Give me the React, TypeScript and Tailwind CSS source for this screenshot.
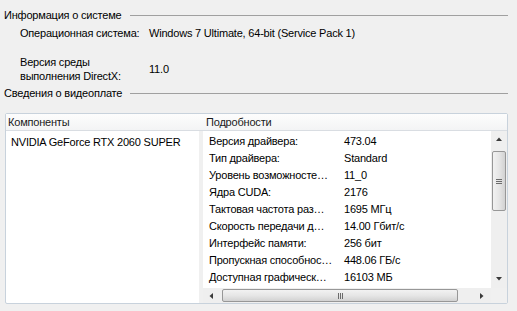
const rows: [string, string][] = [
  ['Версия драйвера:', '473.04'],
  ['Тип драйвера:', 'Standard'],
  ['Уровень возможносте…', '11_0'],
  ['Ядра CUDA:', '2176'],
  ['Тактовая частота раз…', '1695 МГц'],
  ['Скорость передачи д…', '14.00 Гбит/с'],
  ['Интерфейс памяти:', '256 бит'],
  ['Пропускная способнос…', '448.06 ГБ/с'],
  ['Доступная графическ…', '16103 МБ'],
]

function GroupTitle({ title }: { title: string }) {
  return (
    <div className="flex items-center h-[16px] pl-[4px] pr-[9px]">
      <span className="w-[126px] whitespace-nowrap">{title}</span>
      <span className="flex-1 border-t border-[#a0a0a0]" />
    </div>
  )
}

function Arrow({ dir }: { dir: 'up' | 'down' | 'left' | 'right' }) {
  const pts = {
    up: '1,5 4,1.5 7,5',
    down: '1,1 4,4.5 7,1',
    left: '5,1 1.5,4 5,7',
    right: '1,1 4.5,4 1,7',
  }[dir]
  return (
    <svg width="8" height="8" viewBox="0 0 8 8">
      <polygon points={pts} fill="#3a3a3a" />
    </svg>
  )
}

export default function App() {
  return (
    <div
      className="w-[517px] h-[311px] bg-[#f0f0f0] text-[11px] leading-[14px] tracking-[-0.2px] text-black overflow-hidden pt-[7px]"
      style={{ fontFamily: '"Liberation Sans", Arial, sans-serif' }}
    >
      <GroupTitle title="Информация о системе" />
      <div className="flex items-center h-[16px] mt-[2px] pl-[20px]">
        <span className="w-[129px]">Операционная система:</span>
        <span>Windows 7 Ultimate, 64-bit (Service Pack 1)</span>
      </div>
      <div className="flex items-center mt-[14px] pl-[20px]">
        <span className="w-[129px]">
          Версия среды
          <br />
          выполнения DirectX:
        </span>
        <span>11.0</span>
      </div>
      <div className="mt-[2px]">
        <GroupTitle title="Сведения о видеоплате" />
      </div>

      <div className="mt-[12px] ml-[5px] w-[503px] h-[191px] border border-[#c8d2dc] rounded-[2px] flex flex-col bg-white">
        <div className="flex h-[17px] items-center border-b border-[#d9dde2] bg-gradient-to-b from-[#fdfdfd] to-[#f3f4f5] text-[#1a1a1a]">
          <span className="w-[194px] pl-[2px]">Компоненты</span>
          <span className="pl-[6px]">Подробности</span>
        </div>
        <div className="flex flex-1 min-h-0">
          <div className="w-[193px] pl-[5px] pt-[2px]">
            <div className="h-[17px] flex items-center">NVIDIA GeForce RTX 2060 SUPER</div>
          </div>
          <div className="w-[4px] bg-[#f0f0f0]" />
          <div className="flex-1 flex flex-col">
            <div className="flex flex-1 min-h-0">
              <div className="flex-1 pl-[6px] pt-[1px]">
                {rows.map(([k, v]) => (
                  <div key={k} className="flex h-[17px] items-center whitespace-nowrap">
                    <span className="w-[135px]">{k}</span>
                    <span>{v}</span>
                  </div>
                ))}
              </div>
              <div className="w-[16px] bg-[#efefef] flex flex-col items-center">
                <div className="h-[17px] flex items-center justify-center">
                  <Arrow dir="up" />
                </div>
                <div className="mt-[3px] w-[14px] h-[60px] rounded-[2px] border border-[#979797] bg-gradient-to-r from-[#f2f2f2] via-[#e6e6e6] to-[#d2d2d2] flex flex-col items-center justify-center gap-[1px]">
                  <span className="w-[6px] border-t border-[#6b6b6b]" />
                  <span className="w-[6px] border-t border-[#6b6b6b]" />
                  <span className="w-[6px] border-t border-[#6b6b6b]" />
                </div>
                <div className="flex-1" />
                <div className="h-[17px] flex items-center justify-center">
                  <Arrow dir="down" />
                </div>
              </div>
            </div>
            <div className="flex h-[15px]">
              <div className="flex-1 bg-[#efefef] flex items-center">
                <div className="w-[17px] flex items-center justify-center">
                  <Arrow dir="left" />
                </div>
                <div className="ml-[2px] w-[236px] h-[13px] rounded-[2px] border border-[#979797] bg-gradient-to-b from-[#f2f2f2] via-[#e6e6e6] to-[#d2d2d2] flex items-center justify-center gap-[1px]">
                  <span className="h-[6px] border-l border-[#6b6b6b]" />
                  <span className="h-[6px] border-l border-[#6b6b6b]" />
                  <span className="h-[6px] border-l border-[#6b6b6b]" />
                </div>
                <div className="flex-1" />
                <div className="w-[17px] flex items-center justify-center">
                  <Arrow dir="right" />
                </div>
              </div>
              <div className="w-[16px] bg-[#f0f0f0]" />
            </div>
          </div>
        </div>
      </div>
    </div>
  )
}
